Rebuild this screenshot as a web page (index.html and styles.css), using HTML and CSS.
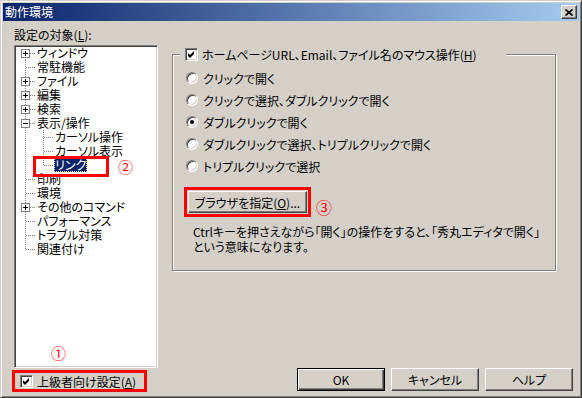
FILE: index.html
```html
<!DOCTYPE html>
<html lang="ja">
<head>
  <meta charset="UTF-8">
  <title>動作環境</title>
  <link rel="stylesheet" href="styles.css">
</head>
<body>
  <div class="window">
    <div class="titlebar">
      <span class="title">動作環境</span>
      <button class="close" type="button">
        <svg width="8" height="7" viewBox="0 0 8 7"><path d="M0.5 0.5l7 6M7.5 0.5l-7 6" stroke="#000" stroke-width="1.7"/></svg>
      </button>
    </div>

    <div class="client">
      <div class="left">
        <div class="caption">設定の対象(<u>L</u>):</div>
        <div class="tree">
          <div class="node first"><svg class="pm" width="9" height="9"><rect x=".5" y=".5" width="8" height="8" fill="#fff" stroke="#808080"/><path d="M2 4.5h5M4.5 2v5" stroke="#000"/></svg><span class="label">ウィンドウ</span></div>
          <div class="node"><span class="label">常駐機能</span></div>
          <div class="node"><svg class="pm" width="9" height="9"><rect x=".5" y=".5" width="8" height="8" fill="#fff" stroke="#808080"/><path d="M2 4.5h5M4.5 2v5" stroke="#000"/></svg><span class="label">ファイル</span></div>
          <div class="node"><svg class="pm" width="9" height="9"><rect x=".5" y=".5" width="8" height="8" fill="#fff" stroke="#808080"/><path d="M2 4.5h5M4.5 2v5" stroke="#000"/></svg><span class="label">編集</span></div>
          <div class="node"><svg class="pm" width="9" height="9"><rect x=".5" y=".5" width="8" height="8" fill="#fff" stroke="#808080"/><path d="M2 4.5h5M4.5 2v5" stroke="#000"/></svg><span class="label">検索</span></div>
          <div class="node"><svg class="pm" width="9" height="9"><rect x=".5" y=".5" width="8" height="8" fill="#fff" stroke="#808080"/><path d="M2 4.5h5" stroke="#000"/></svg><span class="label">表示/操作</span></div>
          <div class="node sub"><span class="label">カーソル操作</span></div>
          <div class="node sub"><span class="label">カーソル表示</span></div>
          <div class="node sub last"><span class="label selected">リンク</span></div>
          <div class="node"><span class="label">印刷</span></div>
          <div class="node"><span class="label">環境</span></div>
          <div class="node"><svg class="pm" width="9" height="9"><rect x=".5" y=".5" width="8" height="8" fill="#fff" stroke="#808080"/><path d="M2 4.5h5M4.5 2v5" stroke="#000"/></svg><span class="label">その他のコマンド</span></div>
          <div class="node"><span class="label">パフォーマンス</span></div>
          <div class="node"><span class="label">トラブル対策</span></div>
          <div class="node last"><span class="label">関連付け</span></div>

          <!-- annotations -->
          <div class="mark mark-link"></div>
          <span class="num num2">②</span>
          <span class="num num1">①</span>
        </div>
        <label class="check advanced">
          <span class="box"><svg width="9" height="9" viewBox="0 0 9 9"><path d="M1 3l2 2l4-4v3l-4 4l-2-2z" fill="#000"/></svg></span>
          <span>上級者向け設定(<u>A</u>)</span>
        </label>
      </div>

      <div class="right">
        <div class="group">
          <div class="group-title">
            <span class="box"><svg width="9" height="9" viewBox="0 0 9 9"><path d="M1 3l2 2l4-4v3l-4 4l-2-2z" fill="#000"/></svg></span>
            <span>ホームページURL、Email、ファイル名のマウス操作(<u>H</u>)</span>
          </div>
          <div class="radio"><span class="dot"></span><span>クリックで開く</span></div>
          <div class="radio"><span class="dot"></span><span>クリックで選択、ダブルクリックで開く</span></div>
          <div class="radio"><span class="dot on"></span><span>ダブルクリックで開く</span></div>
          <div class="radio"><span class="dot"></span><span>ダブルクリックで選択、トリプルクリックで開く</span></div>
          <div class="radio"><span class="dot"></span><span>トリプルクリックで選択</span></div>
          <div class="browse-row">
            <span class="mark-btn"><button class="btn browse" type="button">ブラウザを指定(<u>O</u>)...</button></span>
            <span class="num num3">③</span>
          </div>
          <p class="note">Ctrlキーを押さえながら「開く」の操作をすると、「秀丸エディタで開く」<br>という意味になります。</p>
        </div>

        <div class="buttons">
          <button class="btn default" type="button">OK</button>
          <button class="btn" type="button">キャンセル</button>
          <button class="btn" type="button">ヘルプ</button>
        </div>
      </div>
    </div>
  </div>
</body>
</html>
```

FILE: styles.css
```css
:root {
  --v: repeating-linear-gradient(#808080 0 1px, transparent 1px 2px);
  --h: repeating-linear-gradient(90deg, #808080 0 1px, transparent 1px 2px);
}
* {
  box-sizing: border-box;
}
body {
  margin: 0;
  font-family: "Noto Sans CJK JP", sans-serif;
  font-size: 12px;
  font-feature-settings: "palt";
  color: #000;
  background: #d4d0c8;
}
u {
  text-decoration: underline;
  text-underline-offset: 1px;
}
.window {
  width: 582px;
  height: 398px;
  display: flex;
  flex-direction: column;
  padding: 2px;
  background: #d4d0c8;
  border: 1px solid;
  border-color: #d4d0c8 #404040 #404040 #d4d0c8;
  box-shadow: inset 1px 1px #fff, inset -1px -1px #808080;
}
.titlebar {
  height: 18px;
  display: flex;
  align-items: center;
  padding: 0 2px;
  background: linear-gradient(90deg, #0a246a, #a6caf0);
}
.title {
  color: #fff;
  line-height: 18px;
}
.close {
  margin-left: auto;
  width: 16px;
  height: 14px;
  padding: 0;
  display: flex;
  align-items: center;
  justify-content: center;
  background: #d4d0c8;
  border: 1px solid;
  border-color: #fff #404040 #404040 #fff;
  box-shadow: inset -1px -1px #808080;
}
.client {
  flex: 1;
  display: flex;
  gap: 14px;
  padding: 7px 6px 3px 11px;
}
.left {
  width: 144px;
  display: flex;
  flex-direction: column;
}
.caption {
  line-height: 14px;
  height: 14px;
  margin-bottom: 3px;
}
.tree {
  position: relative;
  height: 323px;
  background: #fff;
  border: 1px solid;
  border-color: #808080 #fff #fff #808080;
  box-shadow: inset 1px 1px #404040, inset -1px -1px #d4d0c8;
  padding: 0 1px;
}
.node {
  position: relative;
  height: 14px;
  line-height: 14px;
  padding-left: 20px;
  background-image: var(--v), var(--h);
  background-position: 9px 0, 10px 7px;
  background-size: 1px 14px, 9px 1px;
  background-repeat: no-repeat;
}
.node.first {
  background-position: 9px 7px, 10px 7px;
  background-size: 1px 7px, 9px 1px;
}
.node.last {
  background-size: 1px 8px, 9px 1px;
}
.node.sub {
  padding-left: 38px;
  background-image: var(--v), var(--v), var(--h);
  background-position: 9px 0, 27px 0, 28px 7px;
  background-size: 1px 14px, 1px 14px, 9px 1px;
}
.node.sub.last {
  background-size: 1px 14px, 1px 8px, 9px 1px;
}
.pm {
  position: absolute;
  left: 5px;
  top: 3px;
}
.label {
  display: inline-block;
  vertical-align: top;
  line-height: 14px;
  height: 14px;
  padding: 0 1px;
  white-space: nowrap;
}
.label.selected {
  background: #0a246a;
  color: #fff;
  outline: 1px dotted #e8e8a8;
  outline-offset: -1px;
}
.mark {
  position: absolute;
  border: 3px solid #ff0000;
}
.mark-link {
  left: 18px;
  top: 110px;
  width: 76px;
  height: 21px;
}
.num {
  position: absolute;
  color: #ff0000;
  font-family: "Liberation Serif", "Noto Sans CJK JP", serif;
  font-size: 15px;
  line-height: 15px;
}
.num2 {
  left: 103px;
  top: 115px;
}
.num1 {
  left: 36px;
  top: 301px;
}
.check {
  display: flex;
  align-items: center;
  gap: 4px;
  white-space: nowrap;
}
.advanced {
  margin: 2px 0 0 -2px;
  width: 135px;
  height: 22px;
  border: 3px solid #ff0000;
  padding-left: 5px;
}
.box {
  width: 13px;
  height: 13px;
  flex: none;
  display: inline-flex;
  align-items: center;
  justify-content: center;
  background: #fff;
  border: 1px solid;
  border-color: #808080 #fff #fff #808080;
  box-shadow: inset 1px 1px #404040, inset -1px -1px #d4d0c8;
}
.right {
  flex: 1;
  display: flex;
  flex-direction: column;
}
.group {
  margin-top: 26px;
  width: 384px;
  height: 217px;
  border: 1px solid #808080;
  box-shadow: inset 1px 1px #fff, 1px 1px #fff;
}
.group-title {
  display: flex;
  align-items: center;
  gap: 4px;
  margin: -7px 0 0 7px;
  width: 326px;
  height: 13px;
  padding-left: 5px;
  background: #d4d0c8;
  white-space: nowrap;
}
.radio {
  display: flex;
  align-items: center;
  gap: 5px;
  height: 22px;
  padding-left: 13px;
  white-space: nowrap;
}
.group-title + .radio {
  margin-top: 6px;
}
.dot {
  position: relative;
  width: 12px;
  height: 12px;
  flex: none;
  border-radius: 50%;
  background: #fff;
  border: 1px solid;
  border-color: #808080 #fff #fff #808080;
  box-shadow: inset 1px 1px #404040, inset -1px -1px #d4d0c8;
}
.dot.on::after {
  content: "";
  position: absolute;
  left: 3px;
  top: 3px;
  width: 4px;
  height: 4px;
  border-radius: 50%;
  background: #000;
}
.browse-row {
  display: flex;
  align-items: flex-end;
  gap: 5px;
  margin: 10px 0 0 11px;
}
.mark-btn {
  display: block;
  border: 3px solid #ff0000;
  padding: 1px;
}
.btn {
  display: block;
  width: 88px;
  height: 23px;
  padding: 0;
  font: inherit;
  color: #000;
  background: #d4d0c8;
  border: 1px solid;
  border-color: #fff #404040 #404040 #fff;
  box-shadow: inset -1px -1px #808080;
}
.btn.browse {
  width: 119px;
  height: 22px;
}
.btn.default {
  border-color: #000;
  box-shadow: inset 1px 1px #fff, inset -1px -1px #404040, inset -2px -2px #808080;
}
.num3 {
  position: static;
  font-size: 16px;
  line-height: 16px;
}
.note {
  margin: 7px 0 0 20px;
  line-height: 15px;
  white-space: nowrap;
}
.buttons {
  margin-top: auto;
  margin-bottom: 1px;
  display: flex;
  justify-content: flex-end;
  gap: 6px;
}
```
